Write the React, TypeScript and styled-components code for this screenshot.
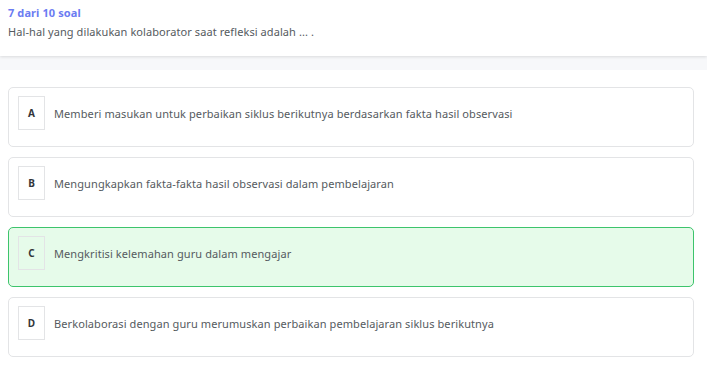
import React from "react";
import styled, { createGlobalStyle } from "styled-components";

const Global = createGlobalStyle`
  html, body { margin: 0; padding: 0; background: #ffffff; }
  body { font-family: "Noto Sans", "DejaVu Sans", sans-serif; }
`;

const Page = styled.div`
  width: 707px;
  min-height: 365px;
  display: flex;
  flex-direction: column;
  background: #ffffff;
`;

const Header = styled.header`
  height: 56px;
  box-sizing: border-box;
  padding: 5px 8px 0 8px;
  background: #ffffff;
  box-shadow: 0 1px 3px rgba(0, 0, 0, 0.12);
  position: relative;
  z-index: 1;
`;

const Counter = styled.div`
  font-size: 11px;
  font-weight: 700;
  color: #6b7cf2;
  line-height: 16px;
  letter-spacing: 0.1px;
`;

const Question = styled.div`
  margin-top: 3px;
  font-size: 11px;
  color: #555a60;
  line-height: 16px;
  letter-spacing: 0.08px;
`;

const Band = styled.div`
  height: 14px;
  background: #f7f8fa;
`;

const Options = styled.div`
  display: flex;
  flex-direction: column;
  gap: 10px;
  padding: 17px 13px 0 8px;
`;

const Card = styled.div<{ $selected?: boolean }>`
  height: 60px;
  box-sizing: border-box;
  display: flex;
  align-items: flex-start;
  gap: 9px;
  padding: 8px 9px 0 9px;
  border-radius: 5px;
  border: 1px solid ${(p) => (p.$selected ? "#3dc46c" : "#e3e4e6")};
  background: ${(p) => (p.$selected ? "#e6fbea" : "#ffffff")};
`;

const Letter = styled.div`
  width: 27px;
  height: 34px;
  box-sizing: border-box;
  flex: none;
  display: flex;
  align-items: center;
  justify-content: center;
  border: 1px solid #e3e4e6;
  font-size: 10px;
  font-weight: 700;
  color: #33363a;
`;

const Text = styled.div`
  height: 34px;
  display: flex;
  align-items: center;
  font-size: 11px;
  color: #555a60;
  letter-spacing: 0.09px;
`;

const options = [
  { key: "A", text: "Memberi masukan untuk perbaikan siklus berikutnya berdasarkan fakta hasil observasi" },
  { key: "B", text: "Mengungkapkan fakta-fakta hasil observasi dalam pembelajaran" },
  { key: "C", text: "Mengkritisi kelemahan guru dalam mengajar", selected: true },
  { key: "D", text: "Berkolaborasi dengan guru merumuskan perbaikan pembelajaran siklus berikutnya" },
];

export default function App() {
  return (
    <Page>
      <Global />
      <Header>
        <Counter>7 dari 10 soal</Counter>
        <Question>Hal-hal yang dilakukan kolaborator saat refleksi adalah ... .</Question>
      </Header>
      <Band />
      <Options>
        {options.map((o) => (
          <Card key={o.key} $selected={o.selected}>
            <Letter>{o.key}</Letter>
            <Text>{o.text}</Text>
          </Card>
        ))}
      </Options>
    </Page>
  );
}
